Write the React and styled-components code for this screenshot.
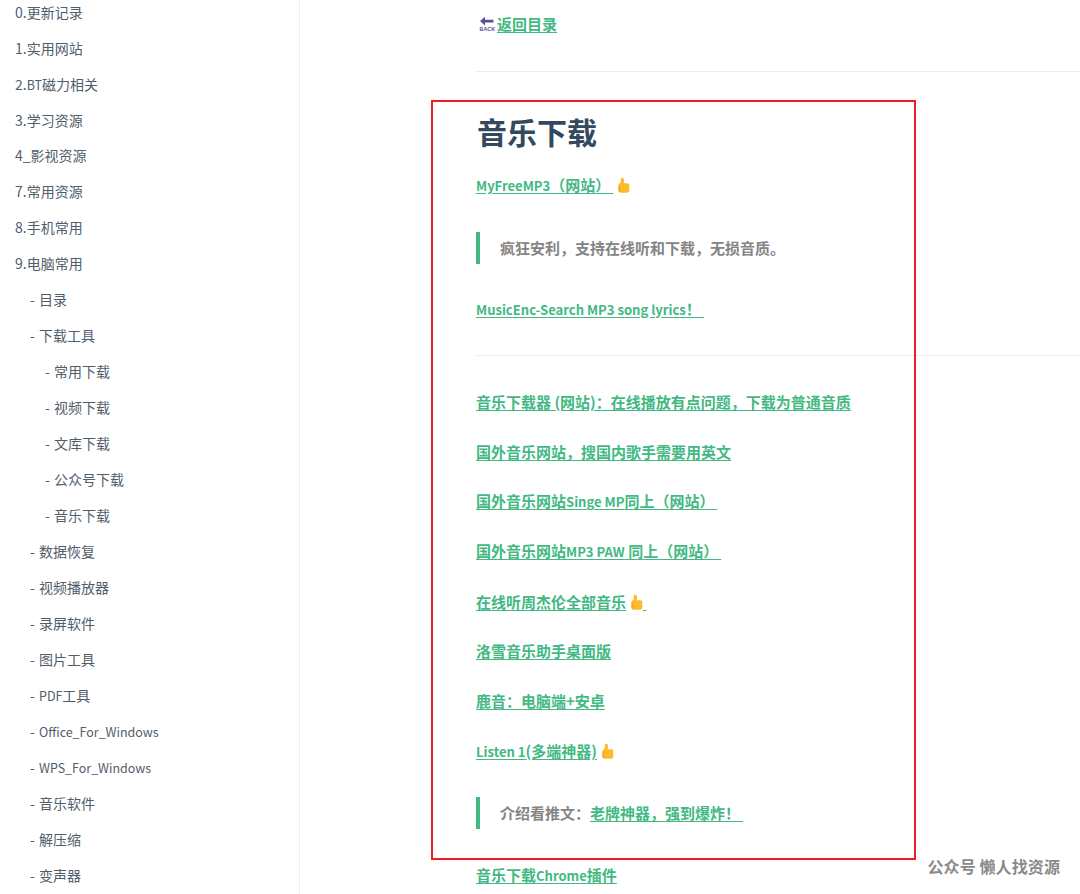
import styled, { createGlobalStyle } from "styled-components";

const GlobalStyle = createGlobalStyle`
  html, body {
    margin: 0;
    padding: 0;
    height: 894px;
    overflow: hidden;
    background: #fff;
  }
  body {
    font-family: "Noto Sans CJK SC", "Noto Sans", sans-serif;
  }
`;

const Page = styled.div`
  position: relative;
  display: flex;
  width: 1080px;
  height: 894px;
  overflow: hidden;
`;

const Sidebar = styled.nav`
  flex: 0 0 299px;
  height: 894px;
  border-right: 1px solid #eee;
  overflow: hidden;
`;

const SideList = styled.ul`
  list-style: none;
  margin: -5.4px 0 0;
  padding: 0;
`;

const SideItem = styled.li`
  height: 35.98px;
  line-height: 35.98px;
  padding-left: ${(p) => 15 + p.$depth * 15}px;
  font-size: 14px;
  word-spacing: 1px;
  color: #505d6b;
  white-space: nowrap;
`;

const Latin = styled.span`
  font-size: 0.89em;
`;

const Main = styled.main`
  flex: 1;
  padding: 0 0 0 176px;
  min-width: 0;
`;

const Link = styled.a`
  color: #42b983;
  font-weight: 600;
  font-size: 15px;
  text-decoration: underline;
  text-underline-offset: 2px;

  ${Latin} {
    font-size: 0.87em;
  }
`;

const Row = styled.p`
  margin: 0;
  height: ${(p) => p.$h || 49.9}px;
  line-height: ${(p) => p.$h || 49.9}px;
  font-size: 15px;
  white-space: nowrap;
  display: flex;
  align-items: center;
`;

const Rule = styled.hr`
  border: 0;
  border-bottom: 1px solid #eee;
  margin: ${(p) => p.$top}px 0 ${(p) => p.$bottom}px;
`;

const Title = styled.h2`
  margin: 0 0 8px 1px;
  height: 62px;
  line-height: 62px;
  font-size: 30px;
  font-weight: 700;
  color: #34495e;
`;

const Quote = styled.blockquote`
  margin: ${(p) => p.$top}px 0 ${(p) => p.$bottom}px;
  height: 32px;
  line-height: 31px;
  border-left: 4px solid #42b983;
  padding-left: 20px;
  color: #858585;
  font-size: 15px;
  font-weight: 600;
  white-space: nowrap;
`;

const Annotation = styled.div`
  position: absolute;
  left: 431px;
  top: 100px;
  width: 481px;
  height: 756px;
  border: 2px solid #ee1c25;
`;

const Watermark = styled.div`
  position: absolute;
  right: 20px;
  top: 855px;
  font-size: 16px;
  line-height: 22px;
  font-weight: 700;
  letter-spacing: 0.1px;
  color: #8a8a8a;
  white-space: nowrap;
`;

const BackSvg = styled.svg`
  width: 21px;
  height: 17px;
  vertical-align: -3px;
`;

const ThumbSvg = styled.svg`
  width: 14px;
  height: 16px;
  margin-left: 3px;
  vertical-align: -2px;
  flex: none;
`;

const sideItems = [
  ["0.更新记录", 0], ["1.实用网站", 0], ["2.BT磁力相关", 0], ["3.学习资源", 0],
  ["4_影视资源", 0], ["7.常用资源", 0], ["8.手机常用", 0], ["9.电脑常用", 0],
  ["- 目录", 1], ["- 下载工具", 1], ["- 常用下载", 2], ["- 视频下载", 2],
  ["- 文库下载", 2], ["- 公众号下载", 2], ["- 音乐下载", 2], ["- 数据恢复", 1],
  ["- 视频播放器", 1], ["- 录屏软件", 1], ["- 图片工具", 1], ["- PDF工具", 1],
  ["- Office_For_Windows", 1], ["- WPS_For_Windows", 1], ["- 音乐软件", 1],
  ["- 解压缩", 1], ["- 变声器", 1],
];

const linkRows = [
  { text: "音乐下载器 (网站)：在线播放有点问题，下载为普通音质" },
  { text: "国外音乐网站，搜国内歌手需要用英文" },
  { text: "国外音乐网站Singe MP同上（网站）\u2009" },
  { text: "国外音乐网站MP3 PAW 同上（网站）\u2009" },
  { text: "在线听周杰伦全部音乐", inner: true },
  { text: "洛雪音乐助手桌面版" },
  { text: "鹿音：电脑端+安卓" },
  { text: "Listen 1(多端神器)", outer: true },
];

// latin runs sit smaller than the CJK text around them
function Mixed({ text }) {
  return text.split(/([A-Za-z][A-Za-z0-9_\-. ]*[A-Za-z0-9!])/).map((part, i) =>
    i % 2 ? <Latin key={i}>{part}</Latin> : part
  );
}

function Thumb() {
  return (
    <ThumbSvg viewBox="0 0 14 16">
      <path
        fill="#fdbb2d"
        d="M5.500.800c1.200-.5 2.400.3 2.400 1.700v3.700h3.300c1.300 0 2.100.9 2.100 2v5.300c0 1.300-1 2.200-2.200 2.200H4.900c-1.300 0-2.400-1-2.400-2.300V8.200c0-.9.500-1.500 1.300-2 .7-.5 1-1.100 1-2V2.200c0-.6.200-1.200.7-1.400z"
      />
      <path fill="#f5a623" d="M2.500 8.500h1.600v6.800c-.9-.3-1.600-1.100-1.600-2.100z" />
    </ThumbSvg>
  );
}

function BackIcon() {
  return (
    <BackSvg viewBox="0 0 21 17">
      <path fill="#5c4f9c" d="M4 5 9 .8v3h8.500v2.800H9v3z" />
      <text x="3.500" y="15" fontFamily="Liberation Sans, sans-serif" fontSize="5.400" fontWeight="700" fill="#5c4f9c">
        BACK
      </text>
    </BackSvg>
  );
}

export default function App() {
  return (
    <Page>
      <GlobalStyle />
      <Sidebar>
        <SideList>
          {sideItems.map(([text, depth]) => (
            <SideItem key={text} $depth={depth}><Mixed text={text} /></SideItem>
          ))}
        </SideList>
      </Sidebar>
      <Main>
        <Row $h={48}>
          <Link>
            <BackIcon />
            返回目录
          </Link>
        </Row>
        <Rule $top={23} $bottom={28} />
        <Title>音乐下载</Title>
        <Row $h={30}>
          <Link><Mixed text={"MyFreeMP3（网站）\u2009"} /></Link>
          <Thumb />
        </Row>
        <Quote $top={32} $bottom={30}>疯狂安利，支持在线听和下载，无损音质。</Quote>
        <Row $h={30}>
          <Link><Mixed text={"MusicEnc-Search MP3 song lyrics！\u00a0"} /></Link>
        </Row>
        <Rule $top={31} $bottom={21} />
        {linkRows.map((row) => (
          <Row key={row.text}>
            <Link>
              <Mixed text={row.text} />
              {row.inner && <Thumb />}
              {row.inner && "\u00a0"}
            </Link>
            {row.outer && <Thumb />}
          </Row>
        ))}
        <Quote $top={21} $bottom={31}>
          介绍看推文：<Link>老牌神器，强到爆炸！{"\u2009"}</Link>
        </Quote>
        <Row $h={30}>
          <Link><Mixed text="音乐下载Chrome插件" /></Link>
        </Row>
      </Main>
      <Annotation />
      <Watermark>公众号 懒人找资源</Watermark>
    </Page>
  );
}
